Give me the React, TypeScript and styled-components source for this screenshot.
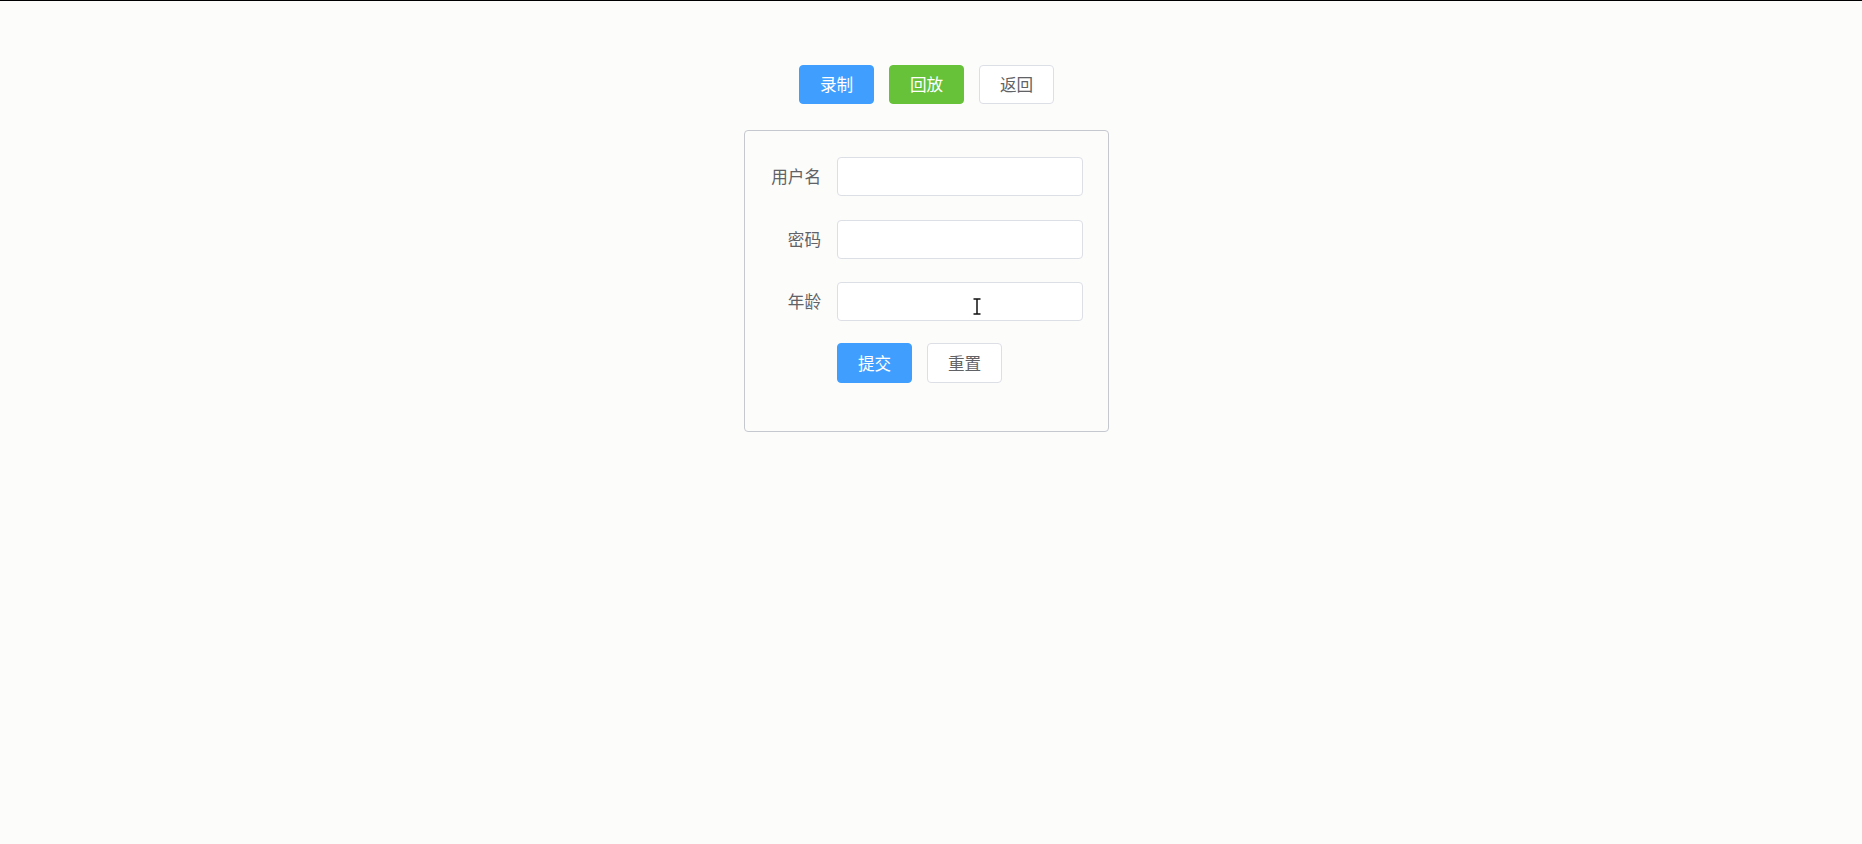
import React from "react";
import styled, { createGlobalStyle } from "styled-components";

const GlobalStyle = createGlobalStyle`
  html, body {
    margin: 0;
    padding: 0;
    background: #fcfcfb;
  }
  body {
    border-top: 1px solid #000;
    font-family: "Noto Sans CJK SC", "Noto Sans", "Liberation Sans", sans-serif;
    color: #606266;
  }
`;

const Page = styled.div`
  display: flex;
  flex-direction: column;
  align-items: center;
  padding: 64px 9px 0 0;
  min-height: 843px;
  box-sizing: border-box;
`;

const Toolbar = styled.div`
  display: flex;
  gap: 15px;
`;

type Variant = "primary" | "success" | "default";

const colors: Record<Variant, { bg: string; border: string; fg: string }> = {
  primary: { bg: "#409eff", border: "#409eff", fg: "#ffffff" },
  success: { bg: "#67c23a", border: "#67c23a", fg: "#ffffff" },
  default: { bg: "#ffffff", border: "#dcdfe6", fg: "#606266" },
};

const Button = styled.button<{ $variant: Variant; $h?: number }>`
  width: 75px;
  height: ${(p) => p.$h ?? 39}px;
  box-sizing: border-box;
  display: flex;
  align-items: center;
  justify-content: center;
  padding: 0;
  border-radius: 4px;
  border: 1px solid ${(p) => colors[p.$variant].border};
  background: ${(p) => colors[p.$variant].bg};
  color: ${(p) => colors[p.$variant].fg};
  font-family: "Noto Sans CJK SC", sans-serif;
  font-size: 16.6px;
  line-height: 1;
  cursor: pointer;
`;

const FormBox = styled.form`
  margin-top: 26px;
  width: 365px;
  box-sizing: border-box;
  border: 1px solid #c6c8cf;
  border-radius: 4px;
  padding: 26px 25px 48px 24px;
  display: flex;
  flex-direction: column;
  gap: 23.5px;
`;

const Row = styled.div`
  display: flex;
  align-items: center;
`;

const Label = styled.label`
  width: 68px;
  box-sizing: border-box;
  padding-right: 16px;
  text-align: right;
  font-size: 16.6px;
  line-height: 1;
  color: #606266;
`;

const InputWrap = styled.div`
  position: relative;
  width: 246px;
  height: 39px;
`;

const Input = styled.input`
  width: 100%;
  height: 100%;
  box-sizing: border-box;
  border: 1px solid #dcdfe6;
  border-radius: 4px;
  background: #ffffff;
  padding: 0 18px;
  font-size: 16.6px;
  outline: none;
`;

const Cursor = styled.svg`
  position: absolute;
  left: 136px;
  top: 16px;
  pointer-events: none;
`;

const Actions = styled.div`
  display: flex;
  gap: 15px;
  margin-left: 68px;
  margin-top: -1.5px;
`;

export default function App() {
  return (
    <>
      <GlobalStyle />
      <Page>
        <Toolbar>
          <Button $variant="primary">录制</Button>
          <Button $variant="success">回放</Button>
          <Button $variant="default">返回</Button>
        </Toolbar>
        <FormBox onSubmit={(e) => e.preventDefault()}>
          <Row>
            <Label>用户名</Label>
            <InputWrap>
              <Input type="text" />
            </InputWrap>
          </Row>
          <Row>
            <Label>密码</Label>
            <InputWrap>
              <Input type="password" />
            </InputWrap>
          </Row>
          <Row>
            <Label>年龄</Label>
            <InputWrap>
              <Input type="text" />
              <Cursor width="8" height="17" viewBox="0 0 8 17">
                <path d="M0.5 1 H7.5 M4 1 V16 M0.5 16 H7.5" stroke="#111" strokeWidth="1.5" fill="none" />
              </Cursor>
            </InputWrap>
          </Row>
          <Actions>
            <Button type="submit" $variant="primary" $h={40}>提交</Button>
            <Button type="reset" $variant="default" $h={40}>重置</Button>
          </Actions>
        </FormBox>
      </Page>
    </>
  );
}
